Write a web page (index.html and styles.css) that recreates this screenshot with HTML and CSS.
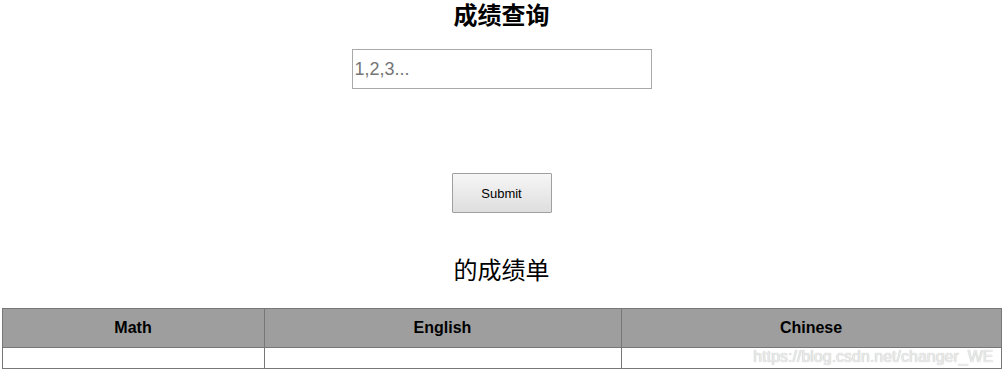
FILE: index.html
```html
<!DOCTYPE html>
<html lang="zh-CN">
<head>
    <meta charset="UTF-8">
    <title>成绩查询</title>
    <link rel="stylesheet" href="styles.css">
</head>
<body>
    <div class="query">
        <h1 class="title">成绩查询</h1>
        <input class="ids" type="text" placeholder="1,2,3...">
        <button class="btn-submit">Submit</button>
        <h2 class="subtitle">的成绩单</h2>
    </div>

    <div class="result">
        <table class="scores">
            <thead>
                <tr>
                    <th class="col-math">Math</th>
                    <th class="col-english">English</th>
                    <th class="col-chinese">Chinese</th>
                </tr>
            </thead>
            <tbody>
                <tr>
                    <td></td>
                    <td></td>
                    <td></td>
                </tr>
            </tbody>
        </table>
        <span class="watermark">https://blog.csdn.net/changer_WE</span>
    </div>
</body>
</html>
```

FILE: styles.css
```css
* {
    box-sizing: border-box;
}

body {
    margin: 0;
    font-family: "Liberation Sans", Arial, "Noto Sans CJK SC", sans-serif;
    color: #000;
    background: #fff;
}

.query {
    display: flex;
    flex-direction: column;
    align-items: center;
}

.title {
    margin: 0;
    height: 49px;
    padding-top: 1px;
    font-size: 24px;
    font-weight: bold;
    line-height: 30px;
}

.ids {
    width: 300px;
    height: 40px;
    margin: 0;
    padding: 0 2px;
    border: 1px solid #a9a9a9;
    font-family: "Liberation Sans", Arial, sans-serif;
    font-size: 18px;
    outline: none;
}

.ids::placeholder {
    color: #757575;
}

.btn-submit {
    width: 100px;
    height: 40px;
    margin-top: 84px;
    border: 1px solid #a0a0a0;
    border-radius: 1px;
    background: linear-gradient(#f6f6f6, #dedede);
    font-family: "Liberation Sans", Arial, sans-serif;
    font-size: 13px;
    color: #000;
}

.subtitle {
    margin: 0;
    padding-top: 43px;
    height: 95px;
    font-size: 24px;
    font-weight: normal;
    line-height: 30px;
}

.result {
    position: relative;
    width: 1000px;
    margin: 0 auto;
}

.scores {
    width: 1000px;
    border-collapse: collapse;
}

.scores th,
.scores td {
    border: 1px solid #777;
}

.scores th {
    height: 39px;
    background: #9e9e9e;
    font-size: 16px;
    font-weight: bold;
}

.scores td {
    height: 21px;
}

.col-math {
    width: 262px;
}

.col-english {
    width: 357px;
}

.watermark {
    position: absolute;
    right: 8px;
    bottom: 3px;
    font-size: 16px;
    color: #ececec;
    text-shadow: 0 0 1px #aaa;
}
```
